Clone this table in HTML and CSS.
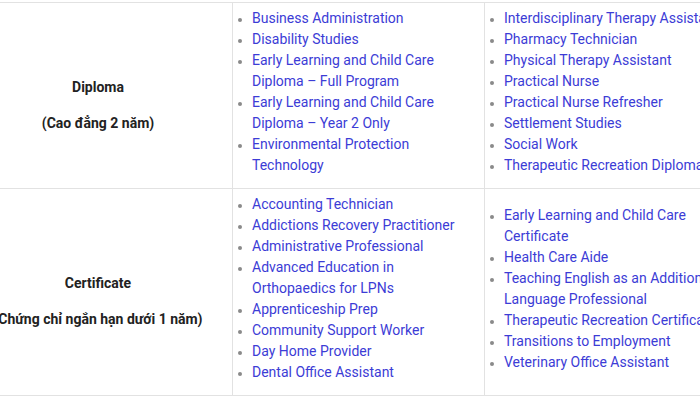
FILE: index.html
```html
<!DOCTYPE html>
<html lang="vi">
<head>
<meta charset="utf-8">
<link rel="stylesheet" href="styles.css">
</head>
<body>
<div class="wrap">
<table class="programs">
  <colgroup>
    <col class="c-type">
    <col class="c-list">
    <col class="c-list">
  </colgroup>
  <tbody>
    <tr>
      <td class="type">
        <p>Diploma</p>
        <p>(Cao đẳng 2 năm)</p>
      </td>
      <td class="list">
        <ul>
          <li><a href="#">Business Administration</a></li>
          <li><a href="#">Disability Studies</a></li>
          <li><a href="#">Early Learning and Child Care Diploma – Full Program</a></li>
          <li><a href="#">Early Learning and Child Care Diploma – Year 2 Only</a></li>
          <li><a href="#">Environmental Protection Technology</a></li>
        </ul>
      </td>
      <td class="list">
        <ul>
          <li><a href="#">Interdisciplinary Therapy Assistant</a></li>
          <li><a href="#">Pharmacy Technician</a></li>
          <li><a href="#">Physical Therapy Assistant</a></li>
          <li><a href="#">Practical Nurse</a></li>
          <li><a href="#">Practical Nurse Refresher</a></li>
          <li><a href="#">Settlement Studies</a></li>
          <li><a href="#">Social Work</a></li>
          <li><a href="#">Therapeutic Recreation Diploma</a></li>
        </ul>
      </td>
    </tr>
    <tr>
      <td class="type">
        <p>Certificate</p>
        <p>(Chứng chỉ ngắn hạn dưới 1 năm)</p>
      </td>
      <td class="list">
        <ul>
          <li><a href="#">Accounting Technician</a></li>
          <li><a href="#">Addictions Recovery Practitioner</a></li>
          <li><a href="#">Administrative Professional</a></li>
          <li><a href="#">Advanced Education in Orthopaedics for LPNs</a></li>
          <li><a href="#">Apprenticeship Prep</a></li>
          <li><a href="#">Community Support Worker</a></li>
          <li><a href="#">Day Home Provider</a></li>
          <li><a href="#">Dental Office Assistant</a></li>
        </ul>
      </td>
      <td class="list">
        <ul>
          <li><a href="#">Early Learning and Child Care Certificate</a></li>
          <li><a href="#">Health Care Aide</a></li>
          <li><a href="#">Teaching English as an Additional Language Professional</a></li>
          <li><a href="#">Therapeutic Recreation Certificate</a></li>
          <li><a href="#">Transitions to Employment</a></li>
          <li><a href="#">Veterinary Office Assistant</a></li>
        </ul>
      </td>
    </tr>
  </tbody>
</table>
</div>
</body>
</html>
```

FILE: styles.css
```css
html, body {
  margin: 0;
  padding: 0;
  overflow: hidden;
  background: #fff;
}
body {
  font-family: Roboto, "Noto Sans", Arial, sans-serif;
  font-size: 14px;
  line-height: 21px;
  color: #222;
}
.wrap {
  padding-top: 2px;
  width: 700px;
  overflow: hidden;
}
.programs {
  border-collapse: collapse;
  table-layout: fixed;
  width: 772px;
  margin-left: -37px;
}
.c-type { width: 269px; }
.c-list { width: 252px; }
.programs td {
  border: 1px solid #e2e2e2;
  padding: 5px;
  vertical-align: middle;
}
.programs td.type {
  text-align: center;
  font-weight: 700;
  color: #222;
  padding-top: 24px;
}
.type p {
  margin: 0 0 15px;
}
.type p:last-child {
  margin-bottom: 0;
}
.list ul {
  margin: 0 0 7px;
  padding-left: 14px;
}
.list li {
  color: #8a8a8a;
}
.list li::marker {
  font-size: 12px;
}
.list a {
  color: #3c3cd6;
  text-decoration: none;
}
```
